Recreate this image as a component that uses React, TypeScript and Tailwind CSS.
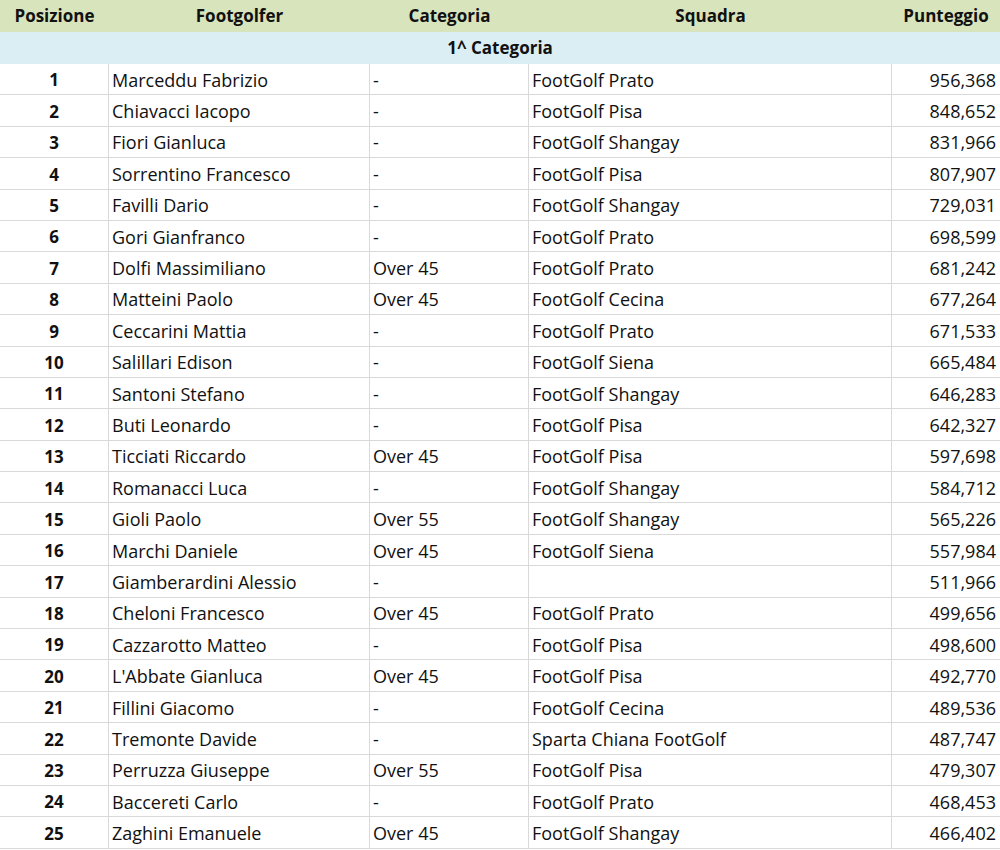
const rows: [string, string, string, string][] = [
  ["Marceddu Fabrizio", "-", "FootGolf Prato", "956,368"],
  ["Chiavacci Iacopo", "-", "FootGolf Pisa", "848,652"],
  ["Fiori Gianluca", "-", "FootGolf Shangay", "831,966"],
  ["Sorrentino Francesco", "-", "FootGolf Pisa", "807,907"],
  ["Favilli Dario", "-", "FootGolf Shangay", "729,031"],
  ["Gori Gianfranco", "-", "FootGolf Prato", "698,599"],
  ["Dolfi Massimiliano", "Over 45", "FootGolf Prato", "681,242"],
  ["Matteini Paolo", "Over 45", "FootGolf Cecina", "677,264"],
  ["Ceccarini Mattia", "-", "FootGolf Prato", "671,533"],
  ["Salillari Edison", "-", "FootGolf Siena", "665,484"],
  ["Santoni Stefano", "-", "FootGolf Shangay", "646,283"],
  ["Buti Leonardo", "-", "FootGolf Pisa", "642,327"],
  ["Ticciati Riccardo", "Over 45", "FootGolf Pisa", "597,698"],
  ["Romanacci Luca", "-", "FootGolf Shangay", "584,712"],
  ["Gioli Paolo", "Over 55", "FootGolf Shangay", "565,226"],
  ["Marchi Daniele", "Over 45", "FootGolf Siena", "557,984"],
  ["Giamberardini Alessio", "-", "", "511,966"],
  ["Cheloni Francesco", "Over 45", "FootGolf Prato", "499,656"],
  ["Cazzarotto Matteo", "-", "FootGolf Pisa", "498,600"],
  ["L'Abbate Gianluca", "Over 45", "FootGolf Pisa", "492,770"],
  ["Fillini Giacomo", "-", "FootGolf Cecina", "489,536"],
  ["Tremonte Davide", "-", "Sparta Chiana FootGolf", "487,747"],
  ["Perruzza Giuseppe", "Over 55", "FootGolf Pisa", "479,307"],
  ["Baccereti Carlo", "-", "FootGolf Prato", "468,453"],
  ["Zaghini Emanuele", "Over 45", "FootGolf Shangay", "466,402"],
];

const cols = "grid grid-cols-[109px_261px_159px_363px_108px]";

export default function App() {
  return (
    <div
      className="w-[1000px] h-[850px] bg-white text-[18px] text-[#111] overflow-hidden"
      style={{ fontFamily: "'Open Sans', 'Liberation Sans', sans-serif" }}
    >
      <div className={`${cols} h-[32px] items-center bg-[#d8e4bc] font-bold text-[17px]`}>
        <div className="text-center">Posizione</div>
        <div className="text-center">Footgolfer</div>
        <div className="text-center">Categoria</div>
        <div className="text-center">Squadra</div>
        <div className="text-center">Punteggio</div>
      </div>
      <div className="h-[32px] flex items-center justify-center bg-[#daeef3] font-bold text-[17px]">
        1^ Categoria
      </div>
      {rows.map((r, i) => (
        <div key={i} className={`${cols} h-[31.4px] border-b border-[#d9d9d9]`}>
          <div className="flex items-center justify-center pt-[2px] font-bold text-[17px] border-r border-[#d9d9d9]">{i + 1}</div>
          <div className="flex items-center pt-[2px] pl-[3px] border-r border-[#d9d9d9] whitespace-nowrap">{r[0]}</div>
          <div className="flex items-center pt-[2px] pl-[3px] border-r border-[#d9d9d9]">{r[1]}</div>
          <div className="flex items-center pt-[2px] pl-[3px] border-r border-[#d9d9d9] whitespace-nowrap">{r[2]}</div>
          <div className="flex items-center justify-end pt-[2px] pr-[4px]">{r[3]}</div>
        </div>
      ))}
    </div>
  );
}
